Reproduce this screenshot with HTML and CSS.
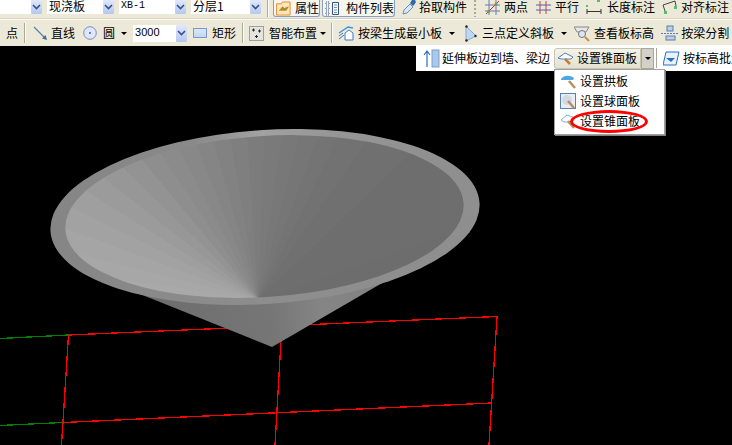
FILE: index.html
```html
<!DOCTYPE html>
<html lang="zh">
<head>
<meta charset="utf-8">
<title>设置锥面板</title>
<link rel="stylesheet" href="styles.css">
</head>
<body>
<div class="app">
  <div class="bar bar-top">
    <div class="combo w31"><span class="field"></span><span class="drop"><svg width="9" height="6" viewBox="0 0 9 6"><path d="M1 1l3.500 3.500L8 1" class="chev"/></svg></span></div>
    <div class="combo w56 ml5"><span class="field">现浇板</span><span class="drop"><svg width="9" height="6" viewBox="0 0 9 6"><path d="M1 1l3.500 3.500L8 1" class="chev"/></svg></span></div>
    <div class="combo w56 ml5"><span class="field latin">XB-1</span><span class="drop"><svg width="9" height="6" viewBox="0 0 9 6"><path d="M1 1l3.500 3.500L8 1" class="chev"/></svg></span></div>
    <div class="combo w59 ml5"><span class="field">分层1</span><span class="drop"><svg width="9" height="6" viewBox="0 0 9 6"><path d="M1 1l3.500 3.500L8 1" class="chev"/></svg></span></div>
    <span class="vsep ml6"></span>
    <div class="toggle t47 ml4"><svg width="16" height="15" viewBox="0 0 16 15"><path d="M.5 2.500h5l1.500-2h8v14H.5z" fill="#fde7b8" stroke="#e8872a"/><path d="M3 10l4-5 2 2 5-2-3 5H6z" fill="#b08a30"/></svg><span>属性</span></div>
    <div class="toggle t73 ml2"><svg width="15" height="15" viewBox="0 0 15 15"><path d="M7.500 1.500h6v12h-6z" fill="#f4f8fc" stroke="#34507c"/><path d="M9 4h3M9 6.500h3M9 9h3M9 11.500h3" stroke="#7a90ac"/><path d="M1 1h3v3H1zM1 6h3v3H1zM1 11h3v3H1z" fill="none" stroke="#34507c" stroke-dasharray="1 1"/></svg><span class="gapm">构件列表</span></div>
    <div class="item ml7 up"><svg width="15" height="16" viewBox="0 0 15 16"><path d="M1 15l1-4 6-6 3 3-6 6z" fill="#d8e8f8" stroke="#6a8cb4"/><path d="M8 4l2-3h3l1 2-2 3 -1 1z" fill="#2e6aa8"/></svg><span class="ml2">拾取构件</span></div>
    <span class="grip ml7"></span>
    <div class="item ml9 up"><svg width="15" height="15" viewBox="0 0 15 15"><path d="M4 0v15M11 0v15M0 5h15M0 11h15" stroke="#6a78b8" fill="none"/><path d="M1 14L14 1" stroke="#d83030"/><circle cx="3.500" cy="11.500" r="1.500" fill="#6aa040"/><circle cx="11" cy="4" r="1.500" fill="#6aa040"/></svg><span class="ml4">两点</span></div>
    <div class="item ml8 up"><svg width="15" height="13" viewBox="0 0 15 13"><path d="M4 0v13M10 0v13" stroke="#c84040"/><path d="M0 4h15M0 9h15" stroke="#5560b0"/></svg><span class="ml4">平行</span></div>
    <div class="item ml7 up"><svg width="16" height="16" viewBox="0 0 16 16"><path d="M1 10v5M15 10v5M1 12.500h14" stroke="#333" fill="none"/><rect x="11" y="0" width="3" height="3" fill="#52c070"/><rect x="0" y="6" width="2" height="2" fill="#52c070"/></svg><span class="ml5">长度标注</span></div>
    <div class="item ml6 up"><svg width="17" height="15" viewBox="0 0 17 15"><path d="M2 5l12-4M4 11L2 5M14 1l1 5" stroke="#444" fill="none"/><rect x="3" y="11" width="3" height="3" fill="#52c070"/><rect x="13" y="6" width="3" height="3" fill="#52c070"/></svg><span class="ml3">对齐标注</span></div>
  </div>
  <div class="bar bar-main">
    <span class="text ml6">点</span>
    <span class="vsep tall ml6"></span>
    <div class="item ml7"><svg width="15" height="15" viewBox="0 0 15 15"><path d="M1 1l12 12" stroke="#5a7fa8" stroke-width="1.300"/><path d="M14 14l-5-1.500 3.500-3.500z" fill="#4a6f98"/></svg><span class="ml3">直线</span></div>
    <div class="item ml8"><svg width="14" height="14" viewBox="0 0 14 14"><circle cx="7" cy="7" r="6.300" fill="#dfe6f8" stroke="#7c8ccc"/><circle cx="7" cy="7" r="1" fill="#4a5aa0"/></svg><span class="ml6">圆</span><i class="caret ml6"></i></div>
    <div class="combo w54 ml6 mid"><span class="field num">3000</span><span class="drop"><svg width="9" height="6" viewBox="0 0 9 6"><path d="M1 1l3.500 3.500L8 1" class="chev"/></svg></span></div>
    <div class="item ml6"><span class="rect-ico"></span><span class="ml5">矩形</span></div>
    <span class="vsep tall ml6"></span>
    <div class="item ml5"><svg width="15" height="15" viewBox="0 0 15 15"><rect x=".5" y=".5" width="14" height="14" fill="#e4e4dc" stroke="#556" stroke-dasharray="1 1"/><path d="M3 4h3M4.500 2.500v3M9 5h3M10.500 3.500v3M6 10.500h3M7.500 9v3" stroke="#223"/></svg><span class="ml5">智能布置</span><i class="caret ml3"></i></div>
    <span class="vsep tall ml5"></span>
    <div class="item ml5"><svg width="16" height="16" viewBox="0 0 16 16"><path d="M1 8l9-6 5 1" fill="none" stroke="#4a90d8" stroke-width="1.500"/><path d="M7 8l4-3 4 3v7H7z" fill="#fff" stroke="#3a7cc8"/><path d="M1 14l5-4M1 11l4-3" stroke="#3a7cc8"/></svg><span class="ml4">按梁生成最小板</span><i class="caret ml7"></i></div>
    <div class="item ml10"><svg width="12" height="17" viewBox="0 0 12 17"><path d="M1 1v15l10-5z" fill="#bcd8f4" stroke="#8aa8c8"/><circle cx="1.500" cy="1.500" r="1.200" fill="#223"/><circle cx="1.500" cy="15.500" r="1.200" fill="#223"/><circle cx="10.500" cy="11" r="1.200" fill="#223"/></svg><span class="ml5">三点定义斜板</span><i class="caret ml7"></i></div>
    <div class="item ml7"><svg width="16" height="17" viewBox="0 0 16 17"><path d="M0 2h15l-3 5H3z" fill="#e6e6e6" stroke="#888"/><circle cx="8" cy="9" r="3.500" fill="#dbe8f4" stroke="#777"/><path d="M11 12l4 4" stroke="#c89040" stroke-width="2"/></svg><span class="ml4">查看板标高</span></div>
    <div class="item ml7"><svg width="18" height="16" viewBox="0 0 18 16"><rect x="5" y="11" width="9" height="4" fill="#bcd0ec" stroke="#5a7cb0"/><rect x="6" y="1" width="6" height="5" fill="#bcd0ec" stroke="#5a7cb0"/><path d="M0 8.500h18" stroke="#5a7cb0" stroke-dasharray="2 1"/></svg><span class="ml2">按梁分割</span></div>
  </div>
  <div class="stage">
    <svg class="scene" width="732" height="399" viewBox="0 46 732 399">
      <defs>
        <linearGradient id="coneFill" gradientUnits="userSpaceOnUse" x1="130" y1="300" x2="470" y2="250">
          <stop offset="0" stop-color="#6c6c6c"/>
          <stop offset=".4" stop-color="#767676"/>
          <stop offset=".55" stop-color="#858585"/>
          <stop offset="1" stop-color="#7c7c7c"/>
        </linearGradient>
      </defs>
      <g class="lines" shape-rendering="crispEdges">
        <path class="red" d="M68.500 335L497 316.500L489 445"/>
        <path class="red" d="M68.500 335L61.500 445M281 340L275 445M63 422.500L491.500 403"/>
        <path class="green" d="M0 338.500L68.500 335M0 425.500L63 422.500"/>
      </g>
      <path class="cone" fill="url(#coneFill)" d="M272 347L120 286L300 240L470 232Z"/>
    </svg>
    <div class="rim"></div>
    <div class="dish"></div>
    <div class="flyout">
      <div class="item ml7"><svg width="17" height="19" viewBox="0 0 17 19"><path d="M4 18V3M1 6l3-4 3 4" fill="none" stroke="#2a70c0" stroke-width="1.200"/><rect x="9" y="1" width="7" height="17" fill="#a8c8ec" stroke="#7aa0cc"/></svg><span class="ml2">延伸板边到墙、梁边</span></div>
      <div class="split ml4"><svg width="17" height="15" viewBox="0 0 17 15"><path d="M1 7l7-5 8 4-2 2H4z" fill="#fff" stroke="#4a80c0"/><path d="M8 8l5 5" stroke="#c08030" stroke-width="2.500"/></svg><span class="ml3">设置锥面板</span></div>
      <div class="split-arrow"><i class="caret"></i></div>
      <span class="vsep flysep ml2"></span>
      <div class="item ml5"><svg width="17" height="15" viewBox="0 0 17 15"><path d="M3 1h13l-3 13H0z" fill="#e8f2fc" stroke="#2a70c0"/><path d="M3 7h9l-4 4z" fill="#2a70c0"/></svg><span class="ml3 clip">按标高批量</span></div>
    </div>
    <div class="menu">
      <div class="menu-row"><svg width="17" height="17" viewBox="0 0 17 17"><path d="M1 6c3-4 9-4 13-1l-1 2H1z" fill="#4aa8e8"/><path d="M9 8l6 7" stroke="#b89060" stroke-width="2.500"/></svg><span>设置拱板</span></div>
      <div class="menu-row"><svg width="17" height="17" viewBox="0 0 17 17"><rect x=".5" y=".5" width="15" height="15" fill="#e8eef8" stroke="#5a80b0"/><circle cx="7" cy="7" r="5" fill="#d4d8e0"/><path d="M8 8l6 7" stroke="#b89060" stroke-width="2.500"/></svg><span>设置球面板</span></div>
      <div class="menu-row"><svg width="17" height="17" viewBox="0 0 17 17"><path d="M1 7l6-5 8 3-3 4H4z" fill="#fff" stroke="#8aaccc"/><path d="M8 8l6 7" stroke="#b89060" stroke-width="2.500"/></svg><span>设置锥面板</span></div>
      <span class="mark"></span>
    </div>
  </div>
</div>
</body>
</html>
```
FILE: styles.css
```css
* { box-sizing: border-box; }
html, body { margin: 0; padding: 0; background: #000; }
body { font: 12px/14px "Noto Sans CJK SC", "Liberation Sans", sans-serif; color: #000; }
.app { width: 732px; height: 445px; overflow: hidden; display: flex; flex-direction: column; }

.bar { display: flex; background: #ece9d8; flex: none; overflow: hidden; white-space: nowrap; }
.bar-top { height: 19px; align-items: flex-start; border-bottom: 1px solid #d8d5c4; }
.bar-main { height: 27px; align-items: center; border-top: 1px solid #fbfaf4; }

.item { display: flex; align-items: center; flex: none; }
.item.up { height: 14px; }
.text { flex: none; }
.ml1 { margin-left: 1px; } .ml2 { margin-left: 2px; } .ml3 { margin-left: 3px; } .ml4 { margin-left: 4px; }
.ml5 { margin-left: 5px; } .ml6 { margin-left: 6px; } .ml7 { margin-left: 7px; } .ml8 { margin-left: 8px; }
.ml9 { margin-left: 9px; } .ml10 { margin-left: 10px; }

.combo { display: flex; flex: none; height: 14px; background: #fff; }
.combo.mid { height: 17px; }
.w31 { width: 42px; } .w56 { width: 67px; } .w59 { width: 70px; } .w54 { width: 54px; }
.field { flex: 1; padding-left: 2px; line-height: 12px; }
.combo.mid .field { line-height: 15px; }
.latin { font: 10px/11px "Liberation Mono", monospace; }
.num { font: 11px/15px "Liberation Sans", sans-serif; }
.drop { width: 11px; flex: none; background: linear-gradient(#dfe8fb, #b4c8f2); display: flex; align-items: center; justify-content: center; border-radius: 1px; }
.chev { fill: none; stroke: #3a5080; stroke-width: 1.600; }

.vsep { width: 2px; height: 17px; flex: none; background: #aca899; border-right: 1px solid #fff; }
.vsep.tall { height: 20px; }
.grip { width: 2px; height: 17px; flex: none; background: repeating-linear-gradient(#aca899 0 2px, transparent 2px 4px); }
.toggle { display: flex; align-items: center; gap: 4px; height: 17px; flex: none; background: #f6f6f0; border: 1px solid #8aa0c0; border-top: 0; border-radius: 0 0 3px 3px; padding-left: 2px; }
.t47 { width: 47px; } .t73 { width: 73px; }
.gapm { margin-left: 2px; }
.caret { display: block; width: 0; height: 0; border: 3px solid transparent; border-top: 3px solid #000; border-bottom: 0; flex: none; }
.rect-ico { width: 14px; height: 10px; flex: none; background: linear-gradient(#dbe6f8, #c4d6f2); border: 1px solid #7a9acc; }

.stage { position: relative; flex: 1; background: #000; }
.scene { position: absolute; left: 0; top: 0; display: block; }
.lines path { fill: none; stroke-width: 1.300; }
.red { stroke: #f00; }
.green { stroke: #008000; }
.rim, .dish { position: absolute; border-radius: 50%; transform: rotate(-3.800deg); }
.rim { left: 50px; top: 84px; width: 430px; height: 174px;
  background: conic-gradient(#a2a2a2 0deg, #979797 40deg, #8f8f8f 80deg, #8e8e8e 120deg, #8d8d8d 180deg, #8c8c8c 220deg, #858585 270deg, #8a8a8a 320deg, #a2a2a2 360deg); }
.dish { left: 64.500px; top: 90px; width: 399px; height: 161px;
  background: conic-gradient(from 270deg at 47% 101%,
    #ababab 0 6deg, #a9a9a9 6deg 12deg, #a7a7a7 12deg 18deg, #a5a5a5 18deg 24deg, #a2a2a2 24deg 30deg,
    #9f9f9f 30deg 36deg, #9b9b9b 36deg 42deg, #979797 42deg 48deg, #939393 48deg 54deg, #8e8e8e 54deg 60deg,
    #8b8b8b 60deg 66deg, #888 66deg 72deg, #858585 72deg 78deg, #828282 78deg 84deg, #7f7f7f 84deg 90deg,
    #7c7c7c 90deg 96deg, #7a7a7a 96deg 102deg, #787878 102deg 108deg, #767676 108deg 114deg, #747474 114deg 120deg,
    #727272 120deg 128deg, #707070 128deg 140deg, #6e6e6e 140deg 165deg, #6d6d6d 165deg 360deg); }
.cone { stroke: none; }

.flyout { position: absolute; left: 416px; top: -1px; width: 316px; height: 26px; background: #fff; display: flex; align-items: center; overflow: hidden; white-space: nowrap; }
.split { display: flex; align-items: center; width: 87px; height: 21px; flex: none; background: linear-gradient(#f4f3ea, #e4e1d0); border: 1px solid #c8c4b0; border-radius: 3px 0 0 3px; padding-left: 2px; }
.split-arrow { width: 13px; height: 21px; flex: none; background: #d4d0c8; border: 1px solid #aca899; display: flex; align-items: center; justify-content: center; }
.flysep { height: 20px; }
.clip { flex: none; }

.menu { position: absolute; left: 554px; top: 23px; width: 111px; height: 66px; background: #fff; border: 1px solid #a0a0a0; box-shadow: 1px 1px 0 #808080; padding-top: 1px; }
.menu-row { display: flex; align-items: center; height: 20px; padding-left: 5px; gap: 3px; }
.mark { position: absolute; left: 15px; top: 40px; width: 78px; height: 23px; border: 3px solid #f00; border-radius: 50%; }
```
